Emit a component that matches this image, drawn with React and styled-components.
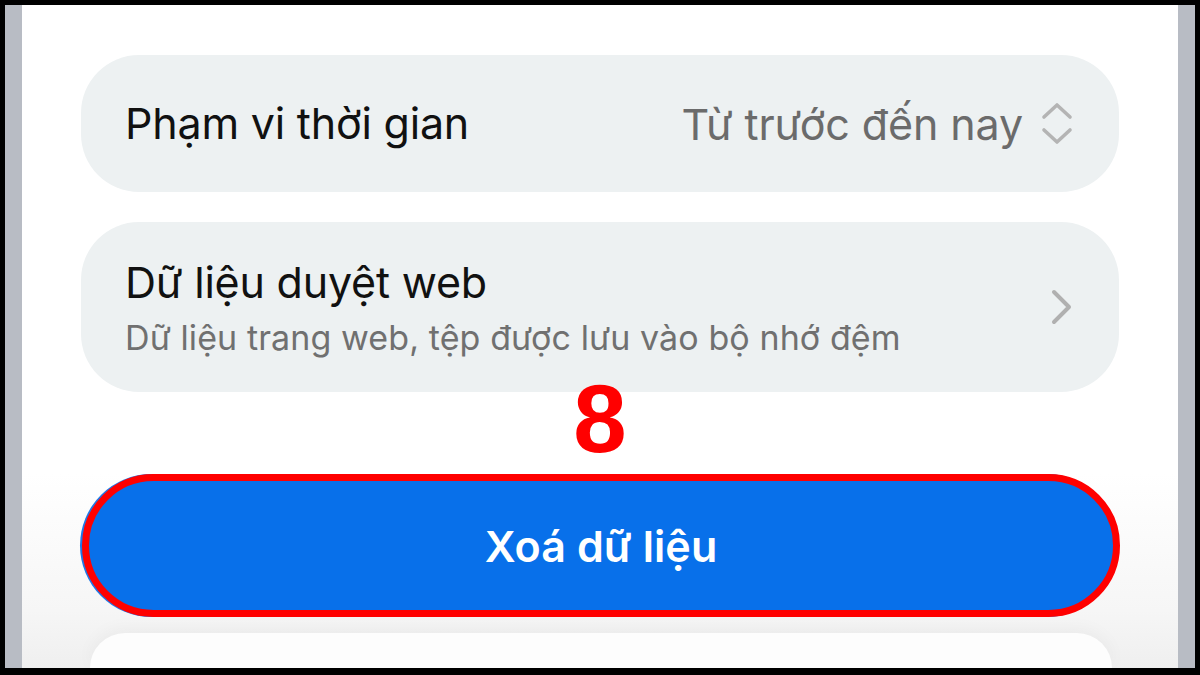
import React from "react";
import styled, { createGlobalStyle } from "styled-components";

const GlobalStyle = createGlobalStyle`
  html, body {
    margin: 0;
    padding: 0;
    background: #000;
  }
  * {
    box-sizing: border-box;
  }
`;

const Frame = styled.div`
  width: 1200px;
  height: 675px;
  background: #000;
  padding: 5px 5px 7px 5px;
  display: flex;
`;

const Bezel = styled.div`
  flex: 1;
  display: flex;
  background: #b8bcc4;
  padding: 0 17px;
`;

const Screen = styled.div`
  position: relative;
  flex: 1;
  display: flex;
  flex-direction: column;
  background: #fff;
  overflow: hidden;
  font-family: Inter, "Noto Sans", sans-serif;
`;

const List = styled.div`
  display: flex;
  flex-direction: column;
  gap: 30px;
  padding: 50px 59px 0;
`;

const Card = styled.div`
  display: flex;
  align-items: center;
  justify-content: space-between;
  height: ${(p) => p.$h}px;
  padding: 0 46px 0 44px;
  background: #edf1f2;
  border-radius: 58px;
`;

const Texts = styled.div`
  display: flex;
  flex-direction: column;
  gap: 10px;
  padding-top: 2px;
`;

const Title = styled.span`
  font-size: 43px;
  line-height: 1.2;
  color: #111;
  letter-spacing: -0.2px;
`;

const Sub = styled.span`
  font-size: 34px;
  line-height: 1.2;
  color: #707070;
  letter-spacing: 0.1px;
`;

const Value = styled.div`
  display: flex;
  align-items: center;
  gap: 18px;
  font-size: 43px;
  color: #6b6b6b;
  letter-spacing: -0.1px;
`;

const Marker = styled.span`
  position: absolute;
  left: 0;
  right: 0;
  top: 366px;
  text-align: center;
  font-family: "Liberation Sans", Arial, sans-serif;
  font-weight: 700;
  font-size: 96px;
  line-height: 1;
  color: #ff0000;
`;

const Footer = styled.div`
  flex: 1;
  display: flex;
  flex-direction: column;
  margin-top: 82px;
  background: linear-gradient(180deg, #fff 0%, #f6f6f6 70%, #efefef 100%);
`;

const ClearButton = styled.button`
  margin: 0 58px 0 60px;
  height: 143px;
  border: 7px solid #ff0000;
  border-radius: 72px;
  background: #0870ea;
  box-shadow: -2px 0 0 #1f78e6;
  color: #fff;
  font-family: Inter, "Noto Sans", sans-serif;
  font-size: 43px;
  font-weight: 600;
  letter-spacing: 0.1px;
  cursor: pointer;
`;

const BottomSheet = styled.div`
  flex: 1;
  margin: 16px 66px 0 68px;
  background: #fdfdfd;
  border-radius: 50px 50px 0 0;
  box-shadow: 0 -4px 18px rgba(0, 0, 0, 0.04);
`;

const UpDown = () => (
  <svg width="32" height="44" viewBox="0 0 32 44" fill="none">
    <path
      d="M3 15 L16 3 L29 15"
      stroke="#b4b4b4"
      strokeWidth="3.6"
      strokeLinecap="round"
      strokeLinejoin="round"
    />
    <path
      d="M3 28 L16 40 L29 28"
      stroke="#b4b4b4"
      strokeWidth="3.6"
      strokeLinecap="round"
      strokeLinejoin="round"
    />
  </svg>
);

const ChevronRight = () => (
  <svg width="22" height="36" viewBox="0 0 22 36" fill="none">
    <path
      d="M3 3 L18 18 L3 33"
      stroke="#b0b0b0"
      strokeWidth="4"
      strokeLinecap="round"
      strokeLinejoin="round"
    />
  </svg>
);

export default function App() {
  return (
    <>
      <GlobalStyle />
      <Frame>
        <Bezel>
          <Screen>
            <List>
              <Card $h={137}>
                <Title>Phạm vi thời gian</Title>
                <Value>
                  Từ trước đến nay
                  <UpDown />
                </Value>
              </Card>
              <Card $h={170}>
                <Texts>
                  <Title>Dữ liệu duyệt web</Title>
                  <Sub>Dữ liệu trang web, tệp được lưu vào bộ nhớ đệm</Sub>
                </Texts>
                <ChevronRight />
              </Card>
            </List>
            <Marker>8</Marker>
            <Footer>
              <ClearButton>Xoá dữ liệu</ClearButton>
              <BottomSheet />
            </Footer>
          </Screen>
        </Bezel>
      </Frame>
    </>
  );
}
